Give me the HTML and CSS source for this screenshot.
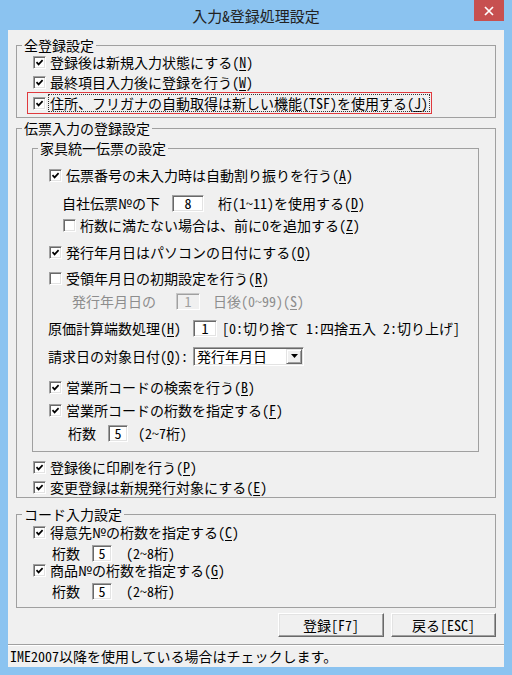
FILE: index.html
```html
<!DOCTYPE html>
<html lang="ja">
<head>
<meta charset="utf-8">
<title>入力&amp;登録処理設定</title>
<link rel="stylesheet" href="styles.css">
</head>
<body>
<div class="window">
  <div class="titlebar">
    <span></span>
    <span class="title">入力&amp;登録処理設定</span>
    <span class="close"><svg width="10" height="10" viewBox="0 0 10 10"><path d="M1 1L9 9M9 1L1 9" stroke="#fff" stroke-width="1.7" fill="none"/></svg></span>
  </div>
  <div class="client">
    <div class="content">
      <section class="group g1">
        <span class="legend">全登録設定</span>
        <div class="row opt"><span class="cb"><svg viewBox="0 0 9 9"><path d="M1.5 4.2L3.6 6.4L7.6 2.2" /></svg></span><span>登録後は新規入力状態にする(<u>N</u>)</span></div>
        <div class="row opt"><span class="cb"><svg viewBox="0 0 9 9"><path d="M1.5 4.2L3.6 6.4L7.6 2.2" /></svg></span><span>最終項目入力後に登録を行う(<u>W</u>)</span></div>
        <div class="row focus"><span class="cb"><svg viewBox="0 0 9 9"><path d="M1.5 4.2L3.6 6.4L7.6 2.2" /></svg></span><span class="focus-label">住所、フリガナの自動取得は新しい機能(TSF)を使用する(<u>J</u>)</span></div>
      </section>

      <section class="group g2">
        <span class="legend">伝票入力の登録設定</span>
        <section class="group sub">
          <span class="legend">家具統一伝票の設定</span>
          <div class="row opt"><span class="cb"><svg viewBox="0 0 9 9"><path d="M1.5 4.2L3.6 6.4L7.6 2.2" /></svg></span><span>伝票番号の未入力時は自動割り振りを行う(<u>A</u>)</span></div>
          <div class="row ind-a m8"><span>自社伝票№の下</span><span class="field w32 gap-l12 gap-r14">8</span><span>桁(1～11)を使用する(<u>D</u>)</span></div>
          <div class="row ind-b m2"><span class="cb off"></span><span>桁数に満たない場合は、前に0を追加する(<u>Z</u>)</span></div>
          <div class="row opt m7"><span class="cb"><svg viewBox="0 0 9 9"><path d="M1.5 4.2L3.6 6.4L7.6 2.2" /></svg></span><span>発行年月日はパソコンの日付にする(<u>O</u>)</span></div>
          <div class="row opt m6"><span class="cb off"></span><span>受領年月日の初期設定を行う(<u>R</u>)</span></div>
          <div class="row ind-c disabled m3"><span>発行年月日の</span><span class="field dis w24 gap-l20 gap-r13">1</span><span>日後(0～99)(<u>S</u>)</span></div>
          <div class="row ind-t m7"><span>原価計算端数処理(<u>H</u>)</span><span class="field w24 gap-l12 gap-r5">1</span><span>[0:切り捨て 1:四捨五入 2:切り上げ]</span></div>
          <div class="row ind-t m8"><span>請求日の対象日付(<u>Q</u>)：</span><span class="combo"><span class="combo-text">発行年月日</span><span class="drop"><svg width="7" height="4" viewBox="0 0 7 4"><path d="M0 0H7L3.5 4Z" fill="#000"/></svg></span></span></div>
          <div class="row opt m11"><span class="cb"><svg viewBox="0 0 9 9"><path d="M1.5 4.2L3.6 6.4L7.6 2.2" /></svg></span><span>営業所コードの検索を行う(<u>B</u>)</span></div>
          <div class="row opt m3"><span class="cb"><svg viewBox="0 0 9 9"><path d="M1.5 4.2L3.6 6.4L7.6 2.2" /></svg></span><span>営業所コードの桁数を指定する(<u>F</u>)</span></div>
          <div class="row ind-d m3"><span>桁数</span><span class="field w20 gap-l12 gap-r10">5</span><span>(2～7桁)</span></div>
        </section>
        <div class="row opt m5"><span class="cb"><svg viewBox="0 0 9 9"><path d="M1.5 4.2L3.6 6.4L7.6 2.2" /></svg></span><span>登録後に印刷を行う(<u>P</u>)</span></div>
        <div class="row opt"><span class="cb"><svg viewBox="0 0 9 9"><path d="M1.5 4.2L3.6 6.4L7.6 2.2" /></svg></span><span>変更登録は新規発行対象にする(<u>E</u>)</span></div>
      </section>

      <section class="group g3">
        <span class="legend">コード入力設定</span>
        <div class="row opt short"><span class="cb"><svg viewBox="0 0 9 9"><path d="M1.5 4.2L3.6 6.4L7.6 2.2" /></svg></span><span>得意先№の桁数を指定する(<u>C</u>)</span></div>
        <div class="row ind-d mid m4"><span>桁数</span><span class="field w20 gap-l12 gap-r14">5</span><span>(2～8桁)</span></div>
        <div class="row opt short"><span class="cb"><svg viewBox="0 0 9 9"><path d="M1.5 4.2L3.6 6.4L7.6 2.2" /></svg></span><span>商品№の桁数を指定する(<u>G</u>)</span></div>
        <div class="row ind-d mid m4"><span>桁数</span><span class="field w20 gap-l12 gap-r14">5</span><span>(2～8桁)</span></div>
      </section>

      <div class="buttons">
        <span class="btn b1">登録[F7]</span>
        <span class="btn b2">戻る[ESC]</span>
      </div>
    </div>
    <div class="statusbar">IME2007以降を使用している場合はチェックします。</div>
  </div>
</div>
</body>
</html>
```

FILE: styles.css
```css
html, body {
  margin: 0;
  padding: 0;
}
body {
  background: #8bc3f0;
  font-family: "Noto Sans CJK JP", "Noto Sans", sans-serif;
  font-size: 14px;
  font-feature-settings: "hwid" 1;
  color: #000;
}
.window {
  width: 512px;
  height: 675px;
  display: flex;
  flex-direction: column;
}
.titlebar {
  flex: none;
  height: 30px;
  display: grid;
  grid-template-columns: 1fr auto 1fr;
}
.title {
  font-size: 15px;
  line-height: 30px;
  color: #222;
  padding-top: 1px;
}
.close {
  justify-self: end;
  align-self: start;
  width: 30px;
  height: 21px;
  margin-right: 8px;
  background: #c75050;
  display: flex;
  align-items: center;
  justify-content: center;
}
.client {
  flex: 1;
  margin: 0 8px 8px;
  background: #f0f0f0;
  display: flex;
  flex-direction: column;
}
.content {
  padding: 15px 8px 0;
  display: flex;
  flex-direction: column;
}
.group {
  position: relative;
  border: 1px solid #a0a0a0;
  display: flex;
  flex-direction: column;
}
.legend {
  position: absolute;
  top: -9px;
  left: 5px;
  padding: 0 2px;
  line-height: 16px;
  background: #f0f0f0;
  white-space: nowrap;
}
.g1 { padding: 6px 0 3px; }
.g2 { margin-top: 10px; }
.g3 { margin-top: 16px; padding: 9px 0 7px; }
.sub {
  margin: 19px 16px 0 15px;
  padding: 16px 0 8px;
}
.row {
  display: flex;
  align-items: center;
  height: 20px;
  line-height: 16px;
  white-space: nowrap;
  flex: none;
}
.row.short { height: 16px; line-height: 14px; }
.row.mid { height: 18px; line-height: 14px; }
.opt { padding-left: 16px; }
.ind-a { padding-left: 29px; }
.ind-b { padding-left: 30px; }
.ind-c { padding-left: 39px; }
.ind-d { padding-left: 35px; }
.ind-t { padding-left: 15px; }
.m2 { margin-top: 2px; }
.m3 { margin-top: 3px; }
.m4 { margin-top: 4px; }
.m5 { margin-top: 5px; }
.m6 { margin-top: 6px; }
.m7 { margin-top: 7px; }
.m8 { margin-top: 8px; }
.m11 { margin-top: 11px; }
u {
  text-underline-offset: 2px;
}
.cb {
  box-sizing: border-box;
  width: 13px;
  height: 13px;
  margin-right: 4px;
  flex: none;
  background: #fff;
  border: 1px solid;
  border-color: #a0a0a0 #fff #fff #a0a0a0;
  box-shadow: inset 1px 1px 0 #696969, inset -1px -1px 0 #e3e3e3;
  display: flex;
  align-items: center;
  justify-content: center;
}
.cb svg {
  width: 9px;
  height: 9px;
}
.cb svg path {
  fill: none;
  stroke: #000;
  stroke-width: 1.7;
}
.focus {
  box-sizing: border-box;
  align-self: flex-start;
  margin-left: 10px;
  width: 405px;
  height: 22px;
  padding-left: 5px;
  border: 1px solid #e03a3e;
}
.focus-label {
  line-height: 16px;
  outline: 1px dotted #333;
  outline-offset: 0;
  padding: 0 1px;
  margin-left: -1px;
}
.field {
  box-sizing: border-box;
  height: 17px;
  background: #fff;
  border: 1px solid;
  border-color: #a0a0a0 #fff #fff #a0a0a0;
  box-shadow: inset 1px 1px 0 #696969, inset -1px -1px 0 #e3e3e3;
  display: flex;
  align-items: center;
  justify-content: center;
  line-height: 14px;
  flex: none;
}
.field.dis {
  background: #f0f0f0;
  color: #a0a0a0;
  border-color: #c8c8c8 #fff #fff #c8c8c8;
  box-shadow: inset 1px 1px 0 #a0a0a0;
}
.w32 { width: 32px; }
.w24 { width: 24px; }
.w20 { width: 20px; }
.gap-l12 { margin-left: 12px; }
.gap-l20 { margin-left: 20px; }
.gap-r14 { margin-right: 14px; }
.gap-r13 { margin-right: 13px; }
.gap-r10 { margin-right: 10px; }
.gap-r5 { margin-right: 5px; }
.disabled { color: #8d8d8d; }
.combo {
  box-sizing: border-box;
  width: 111px;
  height: 19px;
  margin-left: 5px;
  background: #fff;
  border: 1px solid;
  border-color: #a0a0a0 #fff #fff #a0a0a0;
  box-shadow: inset 1px 1px 0 #696969, inset -1px -1px 0 #e3e3e3;
  display: flex;
  align-items: center;
  justify-content: space-between;
  padding: 2px 1px 2px 3px;
}
.combo-text {
  line-height: 14px;
}
.drop {
  box-sizing: border-box;
  width: 16px;
  height: 15px;
  background: #f0f0f0;
  border: 1px solid;
  border-color: #e3e3e3 #696969 #696969 #e3e3e3;
  box-shadow: inset 1px 1px 0 #fff, inset -1px -1px 0 #a0a0a0;
  display: flex;
  align-items: center;
  justify-content: center;
}
.buttons {
  display: flex;
  justify-content: flex-end;
  gap: 7px;
  margin-top: 5px;
}
.btn {
  box-sizing: border-box;
  height: 24px;
  background: #f0f0f0;
  border: 1px solid;
  border-color: #fff #696969 #696969 #fff;
  box-shadow: inset -1px -1px 0 #a0a0a0, inset 1px 1px 0 #e3e3e3;
  display: flex;
  align-items: center;
  justify-content: center;
  line-height: 14px;
}
.b1 { width: 106px; }
.b2 { width: 105px; }
.statusbar {
  margin-top: auto;
  height: 23px;
  box-sizing: border-box;
  border-top: 1px solid #a0a0a0;
  box-shadow: inset 0 1px 0 #fff;
  padding-left: 2px;
  line-height: 22px;
  white-space: nowrap;
}
```
